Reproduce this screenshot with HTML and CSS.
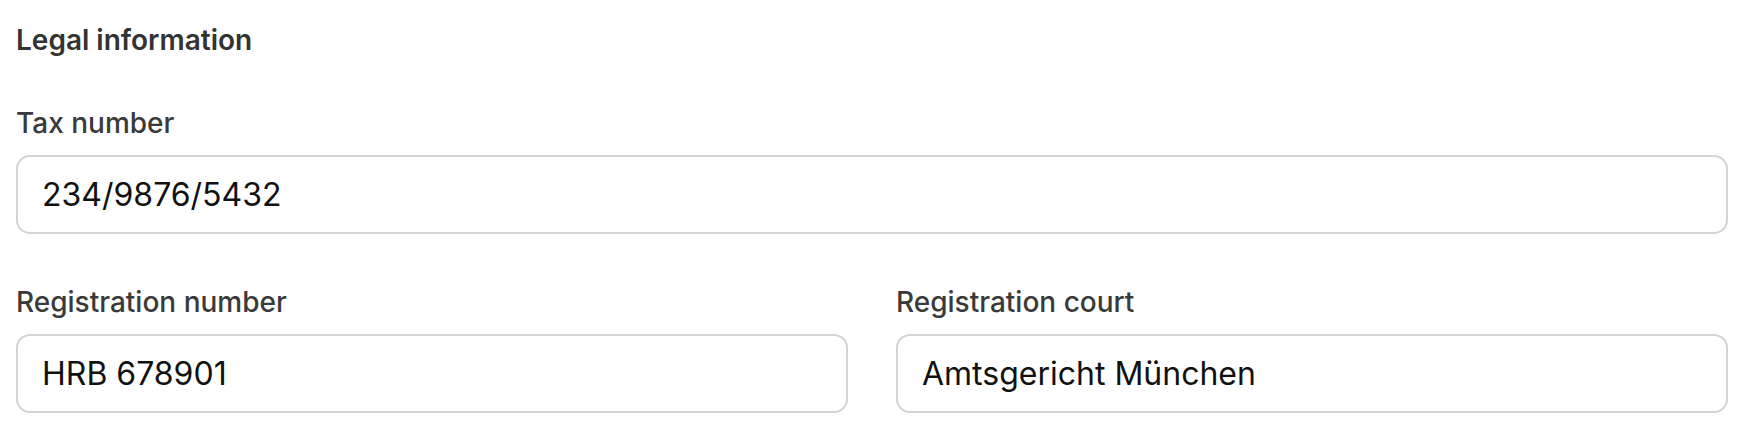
FILE: index.html
```html
<!DOCTYPE html>
<html lang="en">
<head>
<meta charset="utf-8">
<title>Legal information</title>
<link rel="stylesheet" href="styles.css">
</head>
<body>
<section class="legal">
  <h2 class="legal-title">Legal information</h2>
  <div class="field">
    <label class="field-label" for="tax">Tax number</label>
    <input class="field-input" id="tax" type="text" value="234/9876/5432">
  </div>
  <div class="field-row">
    <div class="field">
      <label class="field-label" for="regnum">Registration number</label>
      <input class="field-input" id="regnum" type="text" value="HRB 678901">
    </div>
    <div class="field">
      <label class="field-label" for="regcourt">Registration court</label>
      <input class="field-input" id="regcourt" type="text" value="Amtsgericht München">
    </div>
  </div>
</section>
</body>
</html>
```
FILE: styles.css
```css
* { box-sizing: border-box; }
html, body { margin: 0; padding: 0; background: #ffffff; }
body {
  font-family: Inter, "Noto Sans", "Liberation Sans", sans-serif;
  color: #333333;
}
.legal {
  width: 1744px;
  padding: 20px 16px 0 16px;
  display: flex;
  flex-direction: column;
}
.legal-title {
  margin: 0 0 43px 0;
  font-size: 28px;
  line-height: 40px;
  font-weight: 600;
  color: #333333;
}
.field {
  display: flex;
  flex-direction: column;
  min-width: 0;
}
.field-label {
  font-size: 28px;
  line-height: 40px;
  font-weight: 500;
  color: #3a3a3a;
  margin-bottom: 12px;
}
.field-input {
  width: 100%;
  height: 79px;
  border: 2px solid #d4d4d4;
  border-radius: 14px;
  padding: 0 24px;
  font-family: inherit;
  font-size: 32px;
  color: #111111;
  background: #ffffff;
  outline: none;
}
.field-row {
  margin-top: 48px;
  display: grid;
  grid-template-columns: 1fr 1fr;
  column-gap: 48px;
}
```
